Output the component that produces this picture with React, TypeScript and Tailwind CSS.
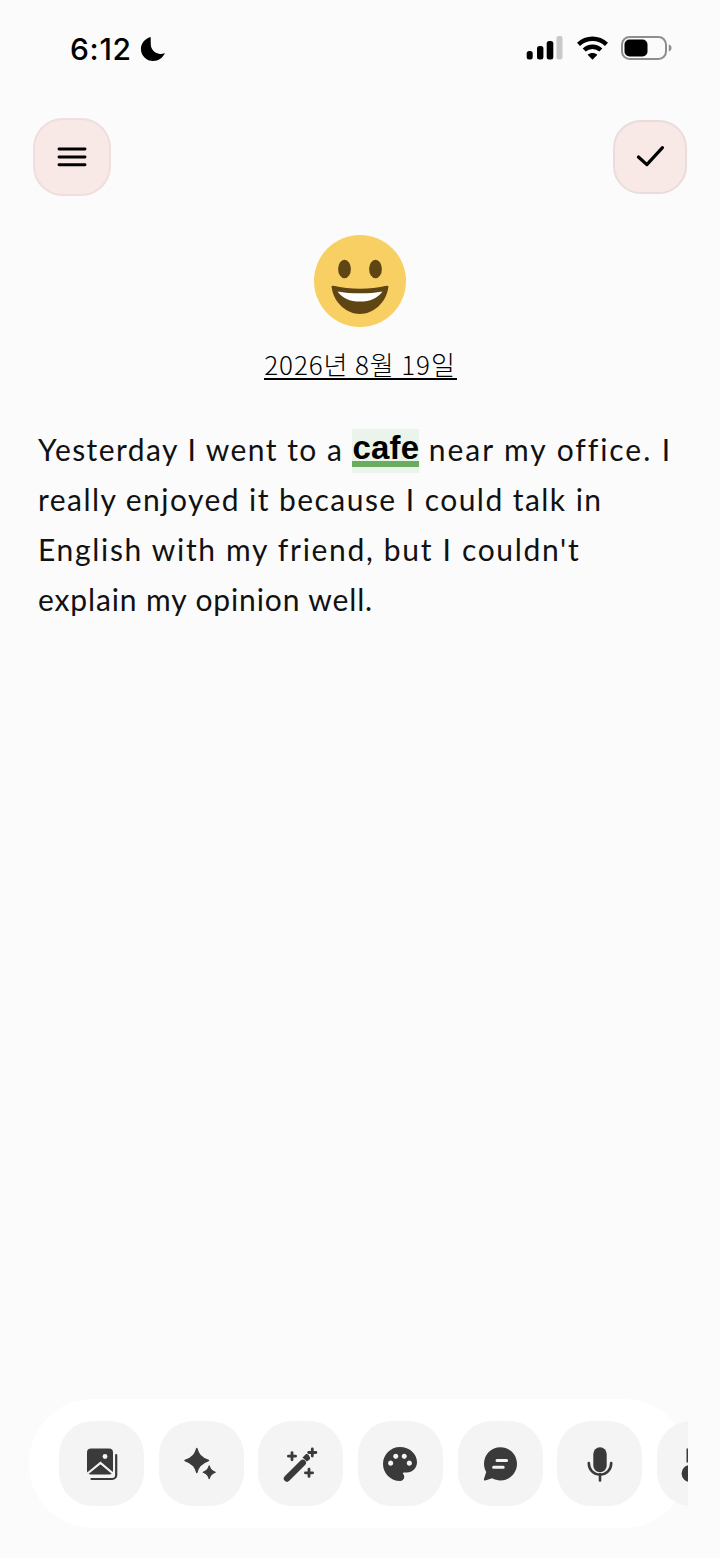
import type { ReactNode } from 'react';

const ink = '#3a3a3a';

function ToolButton({ children }: { children: ReactNode }) {
  return (
    <div className="w-[85px] h-[85px] flex-shrink-0 rounded-[34px] bg-[#f4f4f4] flex items-center justify-center">
      <svg width="40" height="40" viewBox="0 0 40 40" fill={ink}>
        {children}
      </svg>
    </div>
  );
}

export default function App() {
  return (
    <div className="w-[720px] h-[1558px] bg-[#fbfbfb] flex flex-col overflow-hidden text-black font-['Lato',sans-serif]">
      {/* status bar */}
      <div className="h-[61px] mt-[30px] pl-[70px] pr-[48px] flex items-start justify-between flex-shrink-0">
        <div className="flex items-center gap-[8px] pt-[1px]">
          <span className="font-['Inter',sans-serif] text-[30px] leading-[36px] font-medium tracking-[0.7px]">6:12</span>
          <svg width="26" height="26" viewBox="0 0 28 28" fill="#000">
            <path d="M11.5 1 C4.6 3 1 8.2 1 14 C1 21.4 7 27 14.2 27 C20 27 24.6 23.6 26.8 18.4 C25.4 19 23.8 19.3 22.2 19.3 C16.2 19.3 11.6 14.8 11.6 8.7 C11.6 6 11.5 3.4 11.5 1 Z" />
          </svg>
        </div>
        <div className="flex items-start gap-[13px] pt-[6px]">
          <svg width="38" height="24" viewBox="0 0 38 24">
            <rect x="0.7" y="15" width="6" height="8.5" rx="2.5" fill="#000" />
            <rect x="11" y="10" width="6.4" height="13.5" rx="2.5" fill="#000" />
            <rect x="20.7" y="5" width="6.6" height="18.5" rx="2.5" fill="#000" />
            <rect x="30.5" y="0" width="6" height="23.5" rx="2" fill="#c9c9c9" />
          </svg>
          <svg width="31" height="24" viewBox="0 0 31 24" fill="none" stroke="#000" strokeWidth="4.4">
            <path d="M1.5 8.4 C9.5 0.8 21.5 0.8 29.5 8.4" />
            <path d="M7.2 14 C11.8 9.6 19.2 9.6 23.8 14" />
            <path d="M15.5 23.8 L10.6 18.8 C13.4 16.4 17.6 16.4 20.4 18.8 Z" fill="#000" stroke="none" />
          </svg>
          <svg width="51" height="24" viewBox="0 0 51 24">
            <rect x="1" y="1" width="44" height="22" rx="7.5" fill="none" stroke="#8e8e8e" strokeWidth="2" />
            <rect x="3.5" y="3.5" width="23" height="17" rx="5" fill="#000" />
            <path d="M47.8 8.5 C49.5 9 50.5 10.4 50.5 12 C50.5 13.6 49.5 15 47.8 15.5 Z" fill="#8e8e8e" />
          </svg>
        </div>
      </div>

      {/* header buttons */}
      <div className="h-[78px] mt-[27px] pl-[33px] pr-[33px] flex items-center justify-between flex-shrink-0">
        <button className="w-[78px] h-[78px] rounded-[30px] bg-[#f8e9e7] border-2 border-[#efdedd] flex items-center justify-center">
          <svg width="30" height="22" viewBox="0 0 30 22" stroke="#000" strokeWidth="2.9" strokeLinecap="round">
            <path d="M2 3h26M2 11h26M2 18.7h26" />
          </svg>
        </button>
        <button className="w-[74px] h-[74px] rounded-[28px] bg-[#f8e9e7] border-2 border-[#e9dcdc] flex items-center justify-center">
          <svg width="30" height="24" viewBox="0 0 30 24" fill="none" stroke="#000" strokeWidth="3.2" strokeLinecap="round" strokeLinejoin="round">
            <path d="M3.45 12 L11.85 19.6 L27.45 2.6" />
          </svg>
        </button>
      </div>

      {/* mood + date */}
      <div className="flex flex-col items-center mt-[39px] flex-shrink-0">
        <svg width="92" height="92" viewBox="0 0 92 92">
          <circle cx="46" cy="46" r="46" fill="#f7cf63" />
          <ellipse cx="30.5" cy="34" rx="6.4" ry="9.2" fill="#5f4514" />
          <ellipse cx="61.5" cy="34" rx="6.4" ry="9.2" fill="#5f4514" />
          <path d="M17.8 53 C17 51 18 50.4 19.5 50.7 C36 54.6 56 54.6 72.5 50.7 C74 50.4 75 51 74.2 53 C72 68 59 79 46 79 C33 79 20 68 17.8 53 Z" fill="#5f4514" />
          <path d="M23.5 56.4 C36 59 56 59 68.5 56.4 C64 63 56 66.5 46 66.5 C36 66.5 28 63 23.5 56.4 Z" fill="#fff" />
        </svg>
        <div className="mt-[18px] border-b-2 border-black h-[35px] w-[193px] text-center whitespace-nowrap font-['Noto_Sans_CJK_KR',sans-serif] text-[26px] leading-[38px] font-light tracking-[0.9px]">
          2026년 8월 19일
        </div>
      </div>

      {/* diary text, tracking per line stands in for the handwritten font's widths */}
      <div className="mt-[44px] pl-[38px] text-[30px] leading-[50px] whitespace-nowrap text-[#111] flex-shrink-0">
        <span className="tracking-[1.45px]">Yesterday I went to a </span>
        <span className="relative inline-block h-[44px] align-top mt-[5px] bg-[#ebf4ea] font-['Liberation_Sans',sans-serif] font-bold text-[33px] leading-[38px] tracking-[0.2px] text-black">
          cafe
          <span className="absolute left-0 right-0 top-[32px] h-[6px] bg-[#6aad60]" />
        </span>
        <span className="tracking-[1.95px]"> near my office. I</span>
        <br />
        <span className="tracking-[1.45px]">really enjoyed it because I could talk in</span>
        <br />
        <span className="tracking-[1.68px]">English with my friend, but I couldn't</span>
        <br />
        <span className="tracking-[0.88px]">explain my opinion well.</span>
      </div>

      {/* toolbar */}
      <div className="mt-auto mb-[30px] ml-[29px] w-[659px] h-[129px] rounded-[64px] bg-white pl-[30px] flex items-center flex-shrink-0">
        <div className="w-full overflow-hidden flex gap-[14.65px]">
          <ToolButton>
            <path d="M34.2 11 V31 A4 4 0 0 1 30.2 35 H9.5" fill="none" stroke={ink} strokeWidth="2.2" strokeLinecap="round" />
            <rect x="5" y="4.5" width="26" height="26" rx="4" />
            <path d="M5.5 29.5 L18.5 19 L31 29.5" fill="none" stroke="#f4f4f4" strokeWidth="2.2" />
            <circle cx="23" cy="12.5" r="2.4" fill="#f4f4f4" />
          </ToolButton>
          <ToolButton>
            <path d="M15.8 4.5 C17.2 9.4 19 13.6 27.5 16.5 C19 19.4 17.2 23.6 15.8 28.5 C14.4 23.6 12.6 19.4 4 16.5 C12.6 13.6 14.4 9.4 15.8 4.5 Z" stroke={ink} strokeWidth="1.4" strokeLinejoin="round" />
            <path d="M28.2 21.8 C29 25 30.4 26.8 34.2 28.2 C30.4 29.6 29 31.4 28.2 34.6 C27.4 31.4 26 29.6 22.2 28.2 C26 26.8 27.4 25 28.2 21.8 Z" stroke={ink} strokeWidth="1.2" strokeLinejoin="round" />
          </ToolButton>
          <ToolButton>
            <path d="M6 34.5 L21.8 18.8" fill="none" stroke={ink} strokeWidth="6.4" strokeLinecap="round" />
            <path d="M21.5 13.5 L24.5 10.5 C25.5 9.7 27 10 27.6 11 L28.8 13 C29.4 14 29 15.4 28 16 L25.8 17.5 Z" />
            <path d="M11 8.6 V15.8 M7.4 12.2 H14.6" fill="none" stroke={ink} strokeWidth="2.8" strokeLinecap="round" />
            <path d="M31.3 4.9 V12.1 M27.7 8.5 H34.9" fill="none" stroke={ink} strokeWidth="2.8" strokeLinecap="round" />
            <path d="M28 25.2 V32.4 M24.4 28.8 H31.6" fill="none" stroke={ink} strokeWidth="2.8" strokeLinecap="round" />
          </ToolButton>
          <ToolButton>
            <g transform="translate(-0.4 -0.4) scale(1.7)">
              <path fillRule="evenodd" d="M12 2C6.49 2 2 6.49 2 12s4.49 10 10 10c1.38 0 2.5-1.12 2.5-2.5 0-.61-.23-1.2-.64-1.67-.08-.1-.13-.21-.13-.33 0-.28.22-.5.5-.5H16c3.31 0 6-2.69 6-6 0-4.96-4.49-9-10-9zm5.5 11c-.83 0-1.5-.67-1.5-1.5s.67-1.5 1.5-1.5 1.5.67 1.5 1.5-.67 1.5-1.5 1.5zm-3-4c-.83 0-1.5-.67-1.5-1.5S13.67 6 14.5 6s1.5.67 1.5 1.5S15.33 9 14.5 9zM5 11.5c0-.83.67-1.5 1.5-1.5S8 10.67 8 11.5 7.33 13 6.5 13 5 12.33 5 11.5zm6-4c0 .83-.67 1.5-1.5 1.5S8 8.33 8 7.5 8.67 6 9.5 6s1.5.67 1.5 1.5z" />
            </g>
          </ToolButton>
          <ToolButton>
            <path d="M20.5 3.2 C29.7 3.2 37 10.5 37 19.8 C37 29 29.7 36.4 20.5 36.4 C17.4 36.4 14.7 35.7 12.2 34.3 L5.2 36.4 C4.4 36.6 3.7 36 3.9 35.2 L6.2 28 C4.8 25.6 4 22.8 4 19.8 C4 10.5 11.3 3.2 20.5 3.2 Z" />
            <path d="M17 16.6 H26.6 M13.6 23.2 H23.2" fill="none" stroke="#f4f4f4" strokeWidth="3" strokeLinecap="round" />
          </ToolButton>
          <ToolButton>
            <rect x="13.3" y="3.2" width="13.4" height="25" rx="6.7" />
            <path d="M8.8 19 C8.8 26 13.6 30.6 20 30.6 C26.4 30.6 31.2 26 31.2 19" fill="none" stroke={ink} strokeWidth="2.6" strokeLinecap="round" />
            <path d="M20 30.6 V36.5" fill="none" stroke={ink} strokeWidth="2.6" strokeLinecap="round" />
          </ToolButton>
          <ToolButton>
            <circle cx="11" cy="29.5" r="8.4" />
            <rect x="7.5" y="4.5" width="2.6" height="14" />
          </ToolButton>
        </div>
      </div>
    </div>
  );
}
